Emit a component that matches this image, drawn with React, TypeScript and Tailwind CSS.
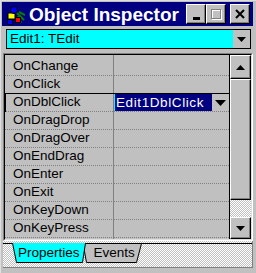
import React from "react";

const rows = [
  "OnChange",
  "OnClick",
  "OnDblClick",
  "OnDragDrop",
  "OnDragOver",
  "OnEndDrag",
  "OnEnter",
  "OnExit",
  "OnKeyDown",
  "OnKeyPress",
];

const dotted =
  "[background-image:linear-gradient(to_right,#808080_50%,transparent_50%)] [background-size:2px_1px] [background-repeat:repeat-x] [background-position:left_bottom]";
const checker =
  "[background-image:repeating-conic-gradient(#c0c0c0_0%_25%,#ffffff_0%_50%)] [background-size:2px_2px]";
const raised =
  "bg-[#c0c0c0] border border-t-white border-l-white border-r-black border-b-black shadow-[inset_-1px_-1px_#808080]";

function Icon() {
  return (
    <svg width="22" height="21" viewBox="0 0 22 21" className="ml-[1px] shrink-0">
      <path d="M14 9 L21 16 M15 12 L18 19 M16 8 L22 11" stroke="#008000" strokeWidth="2" fill="none" />
      <path d="M5 9 L12 9 L12 15 L5 15 Z" fill="#ffff00" stroke="#000" />
      <circle cx="11" cy="6" r="3.5" fill="#0000ff" stroke="#000" />
      <rect x="12.5" y="13.5" width="5" height="5" fill="#ff0000" stroke="#000" />
      <rect x="4.5" y="15.5" width="5" height="5" fill="#0000ff" stroke="#000" />
    </svg>
  );
}

function Row({ label, index }: { label: string; index: number }) {
  const selected = index === 2;
  const blackBottom = index === 1;
  return (
    <div className={`flex h-[18px] ${blackBottom ? "border-b border-black" : ""}`}>
      <div
        className={`w-[108px] text-[13.5px] leading-[16px] text-black whitespace-nowrap ${
          blackBottom ? "" : dotted
        } ${selected ? "border-l border-black pl-[7px]" : "pl-[8px]"}`}
      >
        {label}
      </div>
      <div className="w-[1px]" />
      <div className={`flex-1 flex items-start ${blackBottom ? "" : dotted}`}>
        {selected && (
          <>
            <div className="w-[1px] h-[17px] bg-[#00ffff]" />
            <div className="w-[97px] h-[17px] bg-[#000080] text-white text-[13.5px] leading-[17px] pl-[1px] tracking-[0.6px] whitespace-nowrap overflow-hidden">
              Edit1DblClick
            </div>
            <svg width="11" height="6" viewBox="0 0 11 6" className="ml-[3px] mt-[6px]">
              <polygon points="0,0 11,0 5.5,6" fill="#000" />
            </svg>
          </>
        )}
      </div>
    </div>
  );
}

export default function App() {
  return (
    <div className="w-[256px] h-[273px] bg-[#c0c0c0] border-t border-l border-[#dfdfdf] pl-[1px] pt-[1px] pr-[3px] flex flex-col overflow-hidden [font-family:'Liberation_Sans',Arial,sans-serif]">
      {/* Title bar */}
      <div className="h-[24px] shrink-0 bg-[#000080] flex items-center">
        <Icon />
        <span className="ml-[4px] text-white font-bold text-[19px] leading-none whitespace-nowrap">
          Object Inspector
        </span>
        <div className="ml-auto mr-[3px] flex items-center">
          <div className={`w-[20px] h-[20px] ${raised} flex items-end justify-center pb-[3px]`}>
            <div className="w-[7px] h-[3px] bg-black" />
          </div>
          <div className={`w-[20px] h-[20px] ${raised} flex items-center justify-center`}>
            <div className="w-[10px] h-[10px] border border-[#808080] shadow-[1px_1px_white,inset_1px_1px_white]" />
          </div>
          <div className={`ml-[4px] w-[20px] h-[20px] ${raised} flex items-center justify-center`}>
            <svg width="10" height="10" viewBox="0 0 10 10">
              <path d="M1 1 L9 9 M9 1 L1 9" stroke="#000" strokeWidth="2" />
            </svg>
          </div>
        </div>
      </div>

      {/* Combo */}
      <div className="mt-[3px] ml-[4px] mr-[2px] h-[20px] shrink-0 border border-black bg-[#00ffff] flex">
        <div className="flex-1 pl-[3px] text-[13.5px] leading-[18px] text-black">Edit1: TEdit</div>
        <div className="w-[17px] bg-[#c0c0c0] flex items-center justify-center">
          <svg width="9" height="5" viewBox="0 0 9 5">
            <polygon points="0,0 9,0 4.5,5" fill="#000" />
          </svg>
        </div>
      </div>

      {/* Grid */}
      <div className="mt-[4px] ml-[1px] h-[188px] shrink-0 border border-t-[#808080] border-l-[#808080] border-r-white border-b-white">
        <div className="h-full border border-t-black border-l-black border-r-[#dfdfdf] border-b-[#dfdfdf] flex">
          <div className="flex-1 pt-[3px] flex flex-col [background-image:linear-gradient(#808080,#808080)] [background-repeat:no-repeat] [background-size:1px_100%] [background-position:108px_0]">
            {rows.map((r, i) => (
              <Row key={r} label={r} index={i} />
            ))}
          </div>
          <div className="w-[22px] border-l border-black flex flex-col">
            <div className={`h-[24px] ${raised} flex items-center justify-center`}>
              <svg width="9" height="5" viewBox="0 0 9 5">
                <polygon points="0,5 9,5 4.5,0" fill="#000" />
              </svg>
            </div>
            <div className={`h-[121px] ${raised}`} />
            <div className={`flex-1 ${checker}`} />
            <div className={`h-[22px] ${raised} flex items-center justify-center`}>
              <svg width="9" height="5" viewBox="0 0 9 5">
                <polygon points="0,0 9,0 4.5,5" fill="#000" />
              </svg>
            </div>
          </div>
        </div>
      </div>

      {/* Tabs */}
      <div className={`relative ml-[1px] h-[27px] shrink-0 border-b border-r border-[#808080] ${checker}`}>
        <svg className="absolute inset-0" width="249" height="26" viewBox="0 0 249 26">
          <line x1="0" y1="2.5" x2="249" y2="2.5" stroke="#000" />
          <polygon points="80,2.5 138.5,2.5 133.5,21.5 83.5,21.5" fill="#c0c0c0" stroke="#000" />
          <polygon points="9.5,2 82.5,2 79.5,21.5 13.5,21.5" fill="#00ffff" />
          <polyline points="9.5,2 13.5,21.5 79.5,21.5 82.5,2" fill="none" stroke="#000" />
        </svg>
        <div className="relative flex items-center h-[24px] text-[13.5px] leading-[16px] text-black">
          <span className="ml-[15px]">Properties</span>
          <span className="ml-[14px]">Events</span>
        </div>
      </div>
    </div>
  );
}
